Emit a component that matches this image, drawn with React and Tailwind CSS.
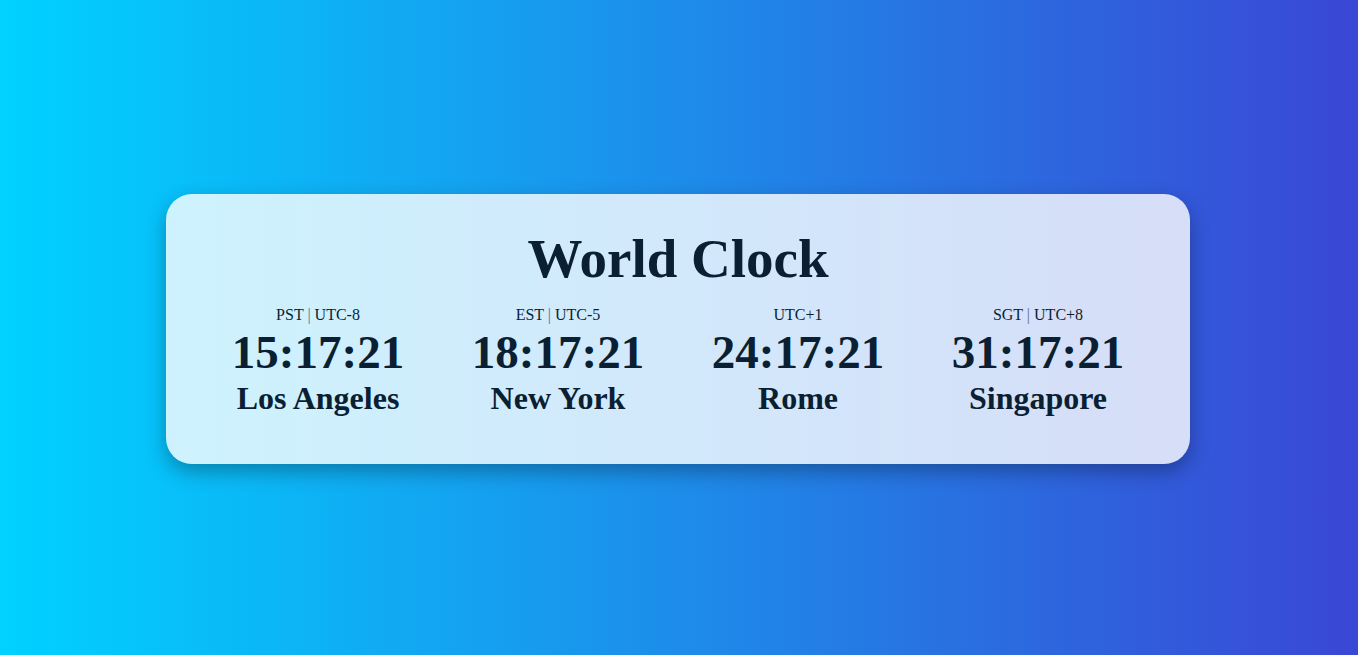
const CLOCKS = [
  { zone: 'PST | UTC-8', time: '15:17:21', city: 'Los Angeles' },
  { zone: 'EST | UTC-5', time: '18:17:21', city: 'New York' },
  { zone: 'UTC+1', time: '24:17:21', city: 'Rome' },
  { zone: 'SGT | UTC+8', time: '31:17:21', city: 'Singapore' },
]

function Zone({ text }) {
  const parts = text.split(' | ')
  if (parts.length < 2) return <span>{text}</span>
  return (
    <span>
      {parts[0]} <span className="text-[#5a6f8a]">|</span> {parts[1]}
    </span>
  )
}

export default function App() {
  return (
    <div
      className="w-full h-[655px] flex items-center justify-center bg-linear-to-r/srgb from-[#00d2ff] to-[#3a47d5] text-[#0b1f33]"
      style={{ fontFamily: '"Liberation Serif", "Times New Roman", serif' }}
    >
      {/* card */}
      <div className="w-[1024px] h-[270px] -ml-[2px] mt-[2px] rounded-[26px] bg-white/80 shadow-[0_8px_20px_rgba(0,0,0,0.3)] px-8 pt-[33px] flex flex-col items-center">
        <h1 className="text-[55px] font-bold leading-[64px]">World Clock</h1>
        <div className="grid grid-cols-4 w-full mt-[15px]">
          {CLOCKS.map(c => (
            <div key={c.city} className="flex flex-col items-center">
              <div className="text-[16px] leading-[18px]"><Zone text={c.zone} /></div>
              <div className="text-[47px] font-bold leading-[50px] mt-[3px]">{c.time}</div>
              <div className="text-[32px] font-bold leading-[38px] mt-[2px]">{c.city}</div>
            </div>
          ))}
        </div>
      </div>
    </div>
  )
}
